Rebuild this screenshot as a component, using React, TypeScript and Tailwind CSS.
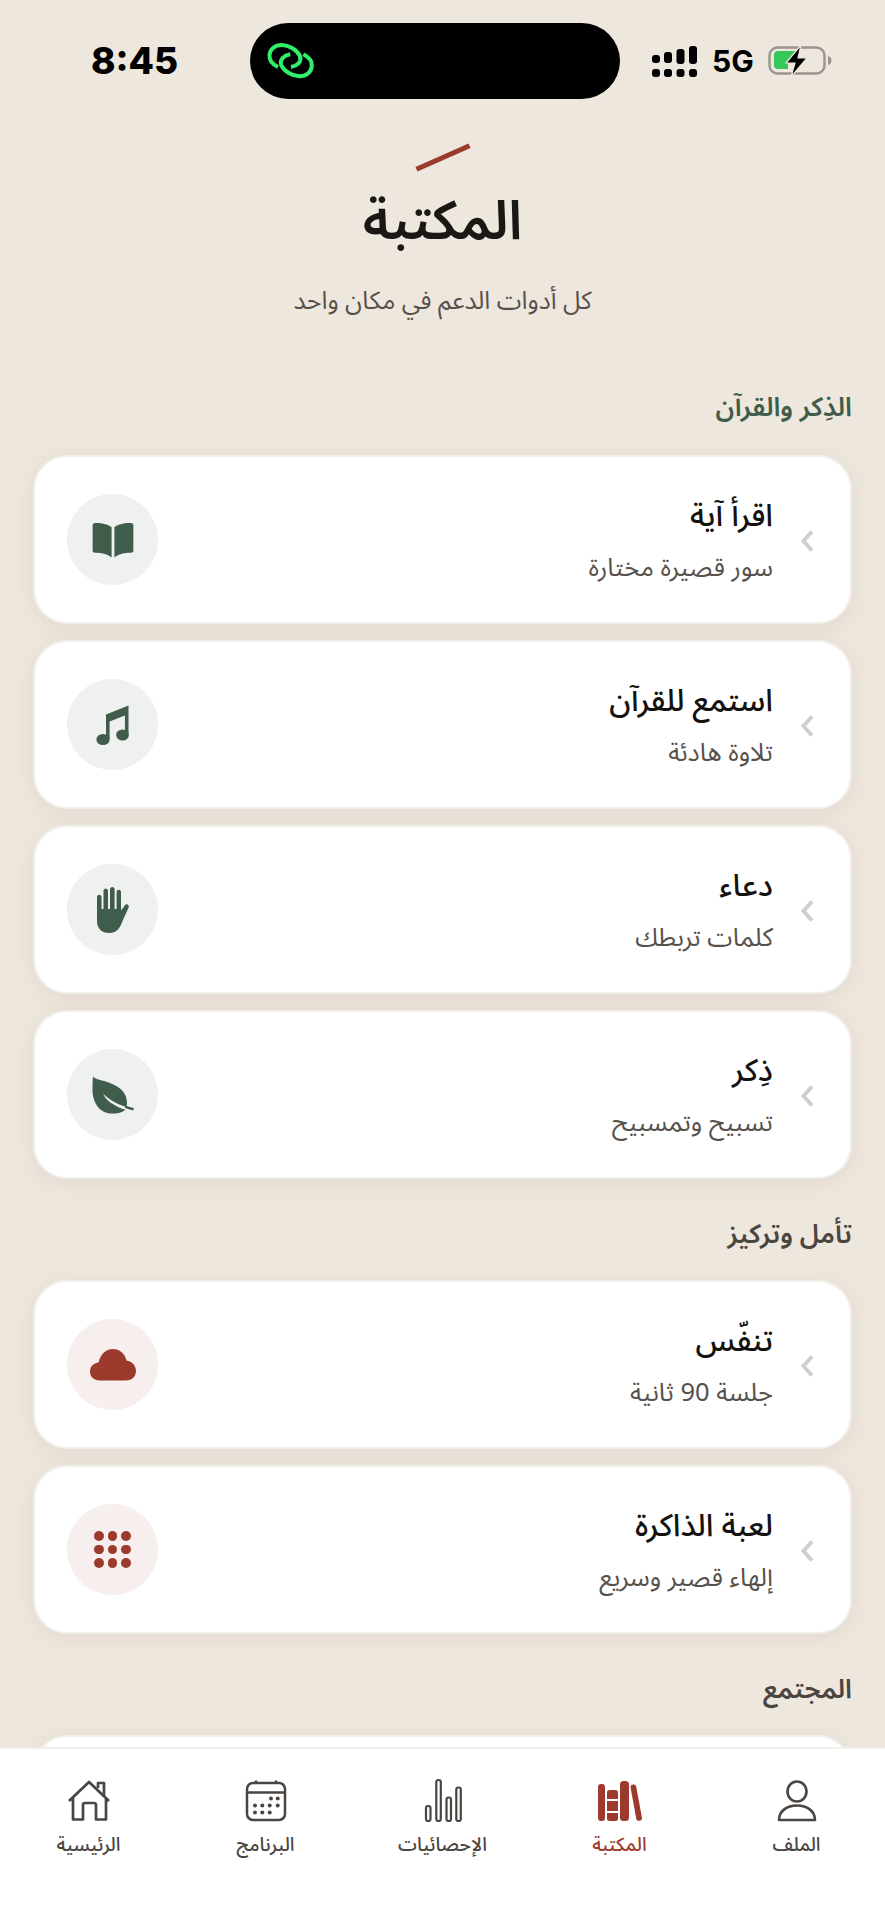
import type { ReactNode } from "react";

const FONT = "font-['Noto_Sans_Arabic','DejaVu_Sans',sans-serif]";

function BookIcon() {
  return (
    <svg width="42" height="36" viewBox="0 0 44 38" fill="#3f5d4a">
      <path d="M20.5 5.500C17 2.500 11 0.800 3 1 1.400 1 0.500 2 0.500 3.500V30c0 1.500 1 2.400 2.500 2.400 7 0 13 1.200 17.500 5V5.500z" />
      <path d="M23.500 5.500C27 2.500 33 0.800 41 1c1.600 0 2.500 1 2.500 2.500V30c0 1.500-1 2.400-2.500 2.400-7 0-13 1.200-17.500 5V5.500z" />
    </svg>
  );
}

function MusicIcon() {
  return (
    <svg width="34" height="40" viewBox="0 0 34 40" fill="#3f5d4a">
      <path d="M10 9.500 32.500 0.500V29h-3.600V10.500L13.600 16.500V34h-3.600V9.500z" />
      <ellipse cx="7" cy="34.500" rx="6.600" ry="5.500" />
      <ellipse cx="26.500" cy="30" rx="6.400" ry="5.500" />
    </svg>
  );
}

function HandIcon() {
  return (
    <svg width="36" height="46" viewBox="0 0 36 46" fill="#3f5d4a">
      <path d="M2 10c0-1.300 1-2.300 2.200-2.300S6.500 8.700 6.500 10v12h2V4c0-1.400 1-2.500 2.200-2.500S13 2.600 13 4v18h2V2.200C15 1 16 0 17.300 0s2.300 1 2.300 2.200V22h2V5c0-1.300 1-2.300 2.200-2.300S26 3.700 26 5v18.500l2.800-3.800c1.600-2.400 2.700-2.700 4-2 1.300.8 1.300 2 .4 3.800l-5.200 11.500C25.300 40 22.500 46 14.500 46 6.500 46 2 41.500 2 34V10z" />
    </svg>
  );
}

function LeafIcon() {
  return (
    <svg width="42" height="38" viewBox="0 0 42 38" fill="#3f5d4a">
      <path d="M1 0.500c3 3.500 9 3.500 14 5.500 9 3.200 20 8 20 21 0 3-1 5.500-2.500 7.500C29 37 25 37.500 20 37.500 8 37.500 0 27 0.500 12 0.600 8 .6 4 1 .5z" />
      <path d="M11 17.500c6 6 13 11 30 15.500l-1 2c-8-1.300-13-3-17.500-6C17 26 13 22.500 11 17.500z" fill="#eff1f0" />
      <path d="M33 29.500 42 32.200 41 34.500 33 32z" />
    </svg>
  );
}

function CloudIcon() {
  return (
    <svg width="46" height="32" viewBox="0 0 46 32" fill="#9c3b2d">
      <path d="M9.500 31.500C4 31.500 0 27.800 0 22.500c0-5 3.500-8.500 8.500-9C10.500 5.500 15.500 0 23 0c6.500 0 11.500 4 13.500 11.500C42 12.500 46 16.500 46 22c0 5.500-4 9.500-10 9.500H9.500z" />
    </svg>
  );
}

function DotsIcon() {
  return (
    <div className="grid grid-cols-3 gap-x-[4px] gap-y-[4px]">
      {Array.from({ length: 9 }).map((_, i) => (
        <span key={i} className="w-[9.500px] h-[9.500px] rounded-full bg-[#9c3b2d]" />
      ))}
    </div>
  );
}

function Chevron() {
  return (
    <svg width="16" height="22" viewBox="0 0 16 22" fill="none" stroke="#cfcfcd" strokeWidth="4">
      <path d="M13 1.500 4.500 11 13 20.500" />
    </svg>
  );
}

function ListCard({
  title,
  sub,
  icon,
  tone,
}: {
  title: string;
  sub: string;
  icon: ReactNode;
  tone: "green" | "red";
}) {
  return (
    <div className="flex items-center h-[169px] rounded-[34px] bg-white border-2 border-[#f1efec] shadow-[0_4px_22px_rgba(90,70,40,0.08)] pr-[34px] pl-[32px]">
      <div className="w-[18px] flex justify-center mt-[3px]">
        <Chevron />
      </div>
      <div className="mr-[25px] flex flex-col gap-[13px]">
        <div className="text-[31px] leading-[44px] font-medium text-[#141210]">{title}</div>
        <div className="text-[25.500px] leading-[34px] text-[#57514c]">{sub}</div>
      </div>
      <div
        className={
          tone === "green"
            ? "mr-auto w-[91px] h-[91px] rounded-full bg-[#eff1f0] flex items-center justify-center"
            : "mr-auto w-[91px] h-[91px] rounded-full bg-[#f6efed] flex items-center justify-center"
        }
      >
        {icon}
      </div>
    </div>
  );
}

function SectionTitle({ children, green }: { children: ReactNode; green?: boolean }) {
  return (
    <h2
      className={
        green
          ? "text-[26.500px] leading-[40px] font-semibold text-[#3f5d4a]"
          : "text-[26.500px] leading-[40px] font-semibold text-[#4b4540]"
      }
    >
      {children}
    </h2>
  );
}

function StatusBar() {
  return (
    <div dir="ltr" className="flex items-center h-[100px] pt-[22px] shrink-0">
      <div className="w-[250px] pl-[91px] font-['Inter',sans-serif] font-extrabold text-[37px] leading-[76px] text-black">
        8:45
      </div>
      <div className="w-[370px] h-[76px] rounded-[38px] bg-black flex items-center pl-[16px]">
        <svg width="49" height="38" viewBox="-2 -2 49 38" fill="none" stroke="#2fef6b" strokeWidth="4">
          <path d="M10 23C4 20 1 16 1.500 11 2 5 7 1 14 1c7 0 15 5 18 11 2 6-3 10-9 11" />
          <path d="M35.300 10.300c6 3 9 7 8.500 12-.5 6-5.500 10-12.500 10-7 0-15-5-18-11-2-6 3-10 9-11" />
        </svg>
      </div>
      <div className="flex items-center pl-[32px]">
        <svg width="45" height="31" viewBox="0 0 45 31" fill="#000">
          <rect x="0" y="9" width="8" height="8" rx="3" />
          <rect x="0" y="23" width="8" height="8" rx="3" />
          <rect x="12" y="6" width="8" height="11" rx="3" />
          <rect x="12" y="23" width="8" height="8" rx="3" />
          <rect x="24.500" y="3" width="8" height="15" rx="3" />
          <rect x="24.500" y="23" width="8" height="8" rx="3" />
          <rect x="37" y="0" width="8" height="18" rx="3" />
          <rect x="37" y="23" width="8" height="8" rx="3" />
        </svg>
        <span className="ml-[15px] font-['Inter',sans-serif] font-bold text-[30px] leading-none text-black">5G</span>
        <svg className="ml-[14px]" width="64" height="32" viewBox="0 0 64 32" fill="none">
          <rect x="1.500" y="2.500" width="55" height="26" rx="8" stroke="#9a958d" strokeWidth="2.400" />
          <path d="M60 11c2 .5 3.500 2 3.500 4.500S62 19.500 60 20z" fill="#9a958d" />
          <path d="M10 6h18l-8 9v9H10a4 4 0 0 1-4-4V10a4 4 0 0 1 4-4z" fill="#34c759" />
          <path d="M33 0 18 18h9l-4 14 16-19h-9l3-13z" fill="#000" stroke="#eee7dd" strokeWidth="1.200" />
        </svg>
      </div>
    </div>
  );
}

const navStroke = "#4a4541";

function NavItem({ label, icon, active }: { label: string; icon: ReactNode; active?: boolean }) {
  return (
    <div className="flex-1 flex flex-col items-center">
      <div className="h-[44px] flex items-end justify-center">{icon}</div>
      <div
        className={
          active
            ? "mt-[9px] text-[19px] leading-[28px] font-medium text-[#9c3b2d]"
            : "mt-[9px] text-[19px] leading-[28px] font-medium text-[#4a4541]"
        }
      >
        {label}
      </div>
    </div>
  );
}

function BottomNav() {
  return (
    <nav dir="rtl" className="h-[173px] shrink-0 bg-white border-t-2 border-[#f0efed] pt-[29px] flex z-10">
      <NavItem
        label="الملف"
        icon={
          <svg width="40" height="42" viewBox="0 0 40 42" fill="none" stroke={navStroke} strokeWidth="2.600">
            <ellipse cx="20" cy="11.500" rx="9.500" ry="10" />
            <path d="M2 40c0-9 8-14.500 18-14.500S38 31 38 40H2z" strokeLinejoin="round" />
          </svg>
        }
      />
      <NavItem
        label="المكتبة"
        active
        icon={
          <svg width="44" height="42" viewBox="0 0 44 42" fill="#9c3b2d">
            <rect x="0" y="4" width="7" height="37" rx="3" />
            <rect x="9" y="10" width="11" height="31" rx="2.500" />
            <rect x="22" y="1" width="9" height="40" rx="3.500" />
            <path d="M32.500 7c-.3-3 5-3.500 5.700-.6l5.800 31.600c.5 3-5 4-5.700 1z" />
            <rect x="9" y="19" width="11" height="2" fill="#fff" />
            <rect x="9" y="31" width="11" height="2" fill="#fff" />
          </svg>
        }
      />
      <NavItem
        label="الإحصائيات"
        icon={
          <svg width="38" height="44" viewBox="0 0 38 44" fill="none" stroke={navStroke} strokeWidth="2.200">
            <rect x="2" y="28" width="4.500" height="15" rx="2" />
            <rect x="12.300" y="2" width="4.500" height="41" rx="2" />
            <rect x="22.500" y="19.500" width="4.500" height="23.500" rx="2" />
            <rect x="32.300" y="9.500" width="4.500" height="33.500" rx="2" />
          </svg>
        }
      />
      <NavItem
        label="البرنامج"
        icon={
          <svg width="42" height="42" viewBox="0 0 42 42" fill="none" stroke={navStroke} strokeWidth="2.500">
            <rect x="2" y="3" width="38" height="37" rx="6" />
            <path d="M2 12.500h38M11 0.500v3M31 0.500v3" />
            <g fill={navStroke} stroke="none">
              <circle cx="26" cy="18.500" r="2" />
              <circle cx="32.700" cy="18.500" r="2" />
              <circle cx="10" cy="25.500" r="2" />
              <circle cx="17.300" cy="25.500" r="2" />
              <circle cx="24.700" cy="25.500" r="2" />
              <circle cx="32.700" cy="25.500" r="2" />
              <circle cx="10" cy="32.500" r="2" />
              <circle cx="17.300" cy="32.500" r="2" />
              <circle cx="24.700" cy="32.500" r="2" />
            </g>
          </svg>
        }
      />
      <NavItem
        label="الرئيسية"
        icon={
          <svg width="44" height="42" viewBox="0 0 44 42" fill="none" stroke={navStroke} strokeWidth="2.700" strokeLinejoin="round">
            <path d="M2 21 22 2 42 21M6 17.500V39.500H16V25a2 2 0 0 1 2-2h9a2 2 0 0 1 2 2v14.500H39V17.500" />
            <path d="M31 8V3h6v14" />
          </svg>
        }
      />
    </nav>
  );
}

export default function App() {
  return (
    <div dir="rtl" className={`${FONT} w-[885px] h-[1920px] overflow-hidden flex flex-col bg-[#eee7dd]`}>
      <div className="flex-1 min-h-0 overflow-hidden">
        <StatusBar />
        <header className="flex flex-col items-center pt-[55px]">
          <div className="w-[58px] h-[5px] bg-[#9c3b2d] -rotate-[24deg]" />
          <h1 className="mt-[29px] text-[54px] leading-[66px] font-semibold text-[#1a1815]">المكتبة</h1>
          <p className="mt-[28px] text-[25px] leading-[36px] text-[#57514c]">كل أدوات الدعم في مكان واحد</p>
        </header>

        <main className="px-[33px] mt-[69px]">
          <SectionTitle green>الذِكر والقرآن</SectionTitle>
          <div className="mt-[27px] flex flex-col gap-[16px]">
            <ListCard title="اقرأ آية" sub="سور قصيرة مختارة" icon={<BookIcon />} tone="green" />
            <ListCard title="استمع للقرآن" sub="تلاوة هادئة" icon={<MusicIcon />} tone="green" />
            <ListCard title="دعاء" sub="كلمات تربطك" icon={<HandIcon />} tone="green" />
            <ListCard title="ذِكر" sub="تسبيح وتمسبيح" icon={<LeafIcon />} tone="green" />
          </div>

          <div className="mt-[36px]">
            <SectionTitle>تأمل وتركيز</SectionTitle>
          </div>
          <div className="mt-[25px] flex flex-col gap-[16px]">
            <ListCard title="تنفّس" sub="جلسة 90 ثانية" icon={<CloudIcon />} tone="red" />
            <ListCard title="لعبة الذاكرة" sub="إلهاء قصير وسريع" icon={<DotsIcon />} tone="red" />
          </div>

          <div className="mt-[36px]">
            <SectionTitle>المجتمع</SectionTitle>
          </div>
          <div className="mt-[25px] h-[169px] rounded-[34px] bg-white border-2 border-[#f1efec] shadow-[0_4px_22px_rgba(90,70,40,0.08)]" />
        </main>
      </div>
      <BottomNav />
    </div>
  );
}
